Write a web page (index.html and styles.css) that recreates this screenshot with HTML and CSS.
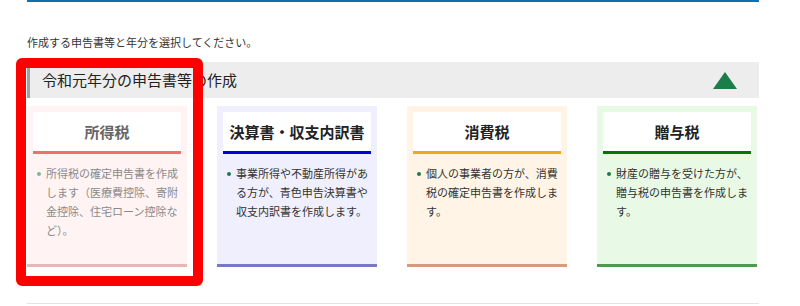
FILE: index.html
```html
<!DOCTYPE html>
<html lang="ja">
<head>
<meta charset="utf-8">
<title>申告書等の作成</title>
<link rel="stylesheet" href="styles.css">
</head>
<body>
<div class="page">
  <div class="topline"></div>
  <p class="intro">作成する申告書等と年分を選択してください。</p>
  <section class="section">
    <div class="heading">
      <h2 class="heading-title">令和元年分の申告書等の作成</h2>
      <svg class="toggle" width="24" height="17" viewBox="0 0 24 17"><polygon points="12,0 24,17 0,17" fill="#1b7d4a"/></svg>
    </div>
    <div class="cards">
      <div class="card card-income">
        <div class="card-title">所得税</div>
        <ul class="card-list">
          <li>所得税の確定申告書を作成<br>します（医療費控除、寄附<br>金控除、住宅ローン控除な<br>ど）。</li>
        </ul>
      </div>
      <div class="card card-blue">
        <div class="card-title">決算書・収支内訳書</div>
        <ul class="card-list">
          <li>事業所得や不動産所得があ<br>る方が、青色申告決算書や<br>収支内訳書を作成します。</li>
        </ul>
      </div>
      <div class="card card-consume">
        <div class="card-title">消費税</div>
        <ul class="card-list">
          <li>個人の事業者の方が、消費<br>税の確定申告書を作成しま<br>す。</li>
        </ul>
      </div>
      <div class="card card-gift">
        <div class="card-title">贈与税</div>
        <ul class="card-list">
          <li>財産の贈与を受けた方が、<br>贈与税の申告書を作成しま<br>す。</li>
        </ul>
      </div>
    </div>
  </section>
  <div class="next-section"></div>
  <div class="highlight"></div>
</div>
</body>
</html>
```

FILE: styles.css
```css
html, body {
  margin: 0;
  padding: 0;
  background: #ffffff;
  overflow: hidden;
}
body {
  font-family: "Noto Sans CJK JP", "Noto Sans", sans-serif;
  color: #333333;
  height: 306px;
}
.page {
  position: relative;
  width: 732px;
  margin-left: 27px;
  height: 306px;
}
.topline {
  height: 2px;
  background: #0f6fb0;
}
.intro {
  margin: 0;
  padding-top: 32px;
  font-size: 11px;
  line-height: 16px;
  height: 28px;
  color: #333333;
}
.heading {
  display: flex;
  align-items: center;
  justify-content: space-between;
  height: 36px;
  background: #ededed;
  border-left: 3px solid #a0a0a0;
  padding: 0 22px 0 12px;
}
.heading-title {
  margin: 0;
  font-size: 15px;
  font-weight: normal;
  color: #222222;
  line-height: 20px;
}
.toggle {
  display: block;
  margin-top: 1px;
}
.cards {
  display: flex;
  gap: 30px;
  margin-top: 8px;
}
.card {
  width: 160px;
  box-sizing: border-box;
  height: 161px;
  padding: 6px 6px 0;
  border-bottom: 3px solid #777;
}
.card-title {
  background: #ffffff;
  height: 39px;
  line-height: 39px;
  text-align: center;
  font-size: 15px;
  font-weight: bold;
  color: #222222;
  border-bottom: 3px solid #000;
}
.card-list {
  list-style: none;
  margin: 10px 0 0;
  padding: 0 0 0 7px;
}
.card-list li {
  position: relative;
  padding-left: 6px;
  font-size: 11px;
  line-height: 19px;
  white-space: nowrap;
  color: #333333;
}
.card-list li::before {
  content: "";
  position: absolute;
  left: -3px;
  top: 8px;
  width: 4px;
  height: 4px;
  border-radius: 50%;
  background: #1e7a4a;
}
.card-income {
  background: #fff3f3;
  border-bottom-color: #e8b6b6;
}
.card-income .card-title {
  color: #666666;
  font-weight: 600;
  border-bottom-color: #f07070;
}
.card-income .card-list li {
  color: #8a8a8a;
}
.card-income .card-list li::before {
  background: #7fb79a;
}
.card-blue {
  background: #efeffd;
  border-bottom-color: #7878c4;
}
.card-blue .card-title {
  border-bottom-color: #0000d0;
}
.card-consume {
  background: #fff4e6;
  border-bottom-color: #d89a7c;
}
.card-consume .card-title {
  border-bottom-color: #f5a51c;
}
.card-gift {
  background: #e8fae6;
  border-bottom-color: #4c9a4c;
}
.card-gift .card-title {
  border-bottom-color: #007800;
}
.next-section {
  margin-top: 36px;
  height: 10px;
  border-top: 1px solid #e4e4e4;
}
.highlight {
  position: absolute;
  left: -11px;
  top: 58px;
  width: 187px;
  height: 228px;
  box-sizing: border-box;
  border: 10px solid #ff0000;
  border-radius: 6px;
}
```
